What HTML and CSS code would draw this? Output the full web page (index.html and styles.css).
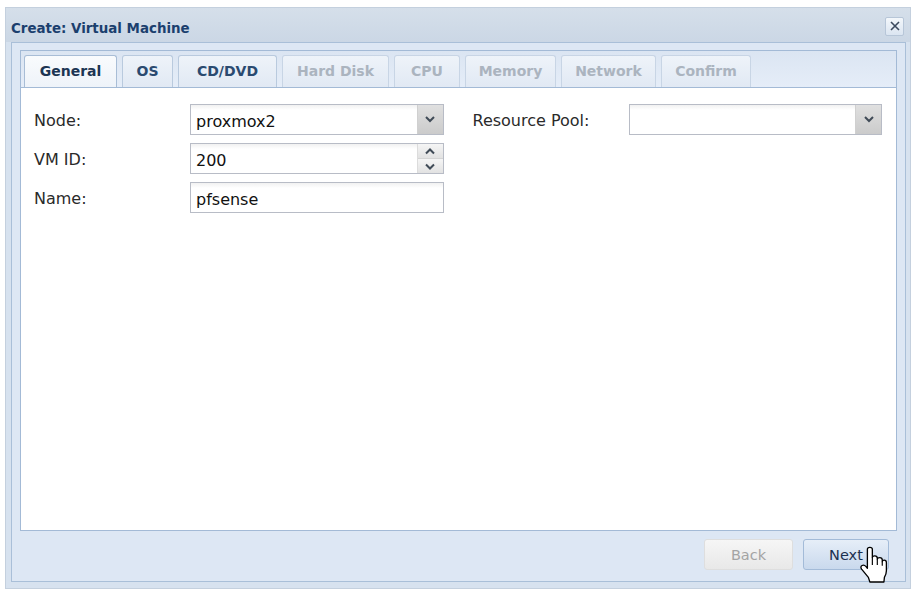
FILE: index.html
```html
<!DOCTYPE html>
<html>
<head>
<meta charset="utf-8">
<link rel="stylesheet" href="styles.css">
</head>
<body>
<div class="window">
  <div class="titlebar">
    <span class="title">Create: Virtual Machine</span>
    <span class="close">
      <svg width="12" height="12" viewBox="0 0 12 12"><path d="M2 2 L10 10 M10 2 L2 10" stroke="#3b4a5e" stroke-width="1.6" fill="none"/></svg>
    </span>
  </div>
  <div class="frame">
    <div class="tabpanel">
      <div class="tabstrip">
        <div class="tab active t-general">General</div>
        <div class="tab on t-os">OS</div>
        <div class="tab on t-cd">CD/DVD</div>
        <div class="tab off t-hd">Hard Disk</div>
        <div class="tab off t-cpu">CPU</div>
        <div class="tab off t-mem">Memory</div>
        <div class="tab off t-net">Network</div>
        <div class="tab off t-conf">Confirm</div>
      </div>
      <div class="content">
        <div class="col">
          <div class="row">
            <label class="lbl">Node:</label>
            <div class="field">
              <span class="val">proxmox2</span>
              <span class="trigger">
                <svg width="10" height="7" viewBox="0 0 10 7"><path d="M1 1 L5 5 L9 1" stroke="#404b57" stroke-width="2" fill="none"/></svg>
              </span>
            </div>
          </div>
          <div class="row">
            <label class="lbl">VM ID:</label>
            <div class="field">
              <span class="val">200</span>
              <span class="spin">
                <span class="spinhalf"><svg width="10" height="7" viewBox="0 0 10 7"><path d="M1 5.5 L5 1.5 L9 5.5" stroke="#404b57" stroke-width="2" fill="none"/></svg></span>
                <span class="spinhalf"><svg width="10" height="7" viewBox="0 0 10 7"><path d="M1 1.5 L5 5.5 L9 1.5" stroke="#404b57" stroke-width="2" fill="none"/></svg></span>
              </span>
            </div>
          </div>
          <div class="row">
            <label class="lbl">Name:</label>
            <div class="field">
              <span class="val">pfsense</span>
            </div>
          </div>
        </div>
        <div class="col">
          <div class="row">
            <label class="lbl">Resource Pool:</label>
            <div class="field">
              <span class="val"></span>
              <span class="trigger">
                <svg width="10" height="7" viewBox="0 0 10 7"><path d="M1 1 L5 5 L9 1" stroke="#404b57" stroke-width="2" fill="none"/></svg>
              </span>
            </div>
          </div>
        </div>
      </div>
    </div>
    <div class="toolbar">
      <div class="btn disabled">Back</div>
      <div class="btn primary">Next
        <svg class="cursor" width="30" height="38" viewBox="0 0 18 23">
          <path d="M5 2 Q5 0.8 6.5 0.8 Q8 0.8 8 2 L8 7 Q8 6 9.5 6 Q11 6 11 7.5 L11 8 Q11 7 12.5 7 Q14 7 14 8.5 L14 9.5 Q14 8.5 15.2 8.5 Q16.5 8.5 16.5 10 L16.5 15 Q16.5 17 15.3 19 L15 21.8 L6.5 21.8 L5.6 19 L1.5 14 Q0.5 12.5 1.8 11.8 Q3 11.2 4.2 12.5 L5 13.5 Z" fill="#fff" stroke="#000" stroke-width="0.8" stroke-linejoin="round"/>
          <path d="M8 7 L8 11.5 M11 8 L11 11.5 M14 9.5 L14 12" stroke="#000" stroke-width="0.7" fill="none"/>
        </svg>
      </div>
    </div>
  </div>
</div>
</body>
</html>
```
FILE: styles.css
```css
html, body {
  margin: 0;
  padding: 0;
  background: #ffffff;
}
body {
  font-family: "DejaVu Sans", sans-serif;
}
.window {
  margin: 7px 0 0 5px;
  width: 906px;
  height: 582px;
  box-sizing: border-box;
  border: 1px solid #c4d0de;
  background: #d7e2ef;
  display: flex;
  flex-direction: column;
}
.titlebar {
  height: 34px;
  display: flex;
  align-items: center;
  justify-content: space-between;
  padding: 0 6px 0 5px;
  background: linear-gradient(#d5dfea, #cbd7e5);
}
.title {
  font-weight: bold;
  font-size: 13.4px;
  color: #1b3f6e;
  padding-top: 6px;
}
.close {
  width: 19px;
  height: 19px;
  box-sizing: border-box;
  border: 1px solid #b7c6d8;
  border-radius: 2px;
  background: linear-gradient(#f3f7fb, #dbe5f1);
  display: flex;
  align-items: center;
  justify-content: center;
  margin-top: 2px;
}
.frame {
  flex: 1;
  margin: 0 4px 6px 5px;
  border: 1px solid #a9bfd8;
  background: #dde7f4;
  display: flex;
  flex-direction: column;
  padding: 7px 8px 0 8px;
}
.tabpanel {
  height: 481px;
  box-sizing: border-box;
  border: 1px solid #a3bad6;
  display: flex;
  flex-direction: column;
  background: #fff;
}
.tabstrip {
  height: 37px;
  box-sizing: border-box;
  background: linear-gradient(#dbe5f2, #e5edf8);
  border-bottom: 1px solid #a3bad6;
  display: flex;
  align-items: flex-end;
  gap: 5px;
  padding-left: 3px;
}
.tab {
  height: 32px;
  box-sizing: border-box;
  border: 1px solid #b9cade;
  border-bottom: none;
  border-radius: 3px 3px 0 0;
  background: linear-gradient(#eef3f9, #e1e9f4);
  font-weight: bold;
  font-size: 14px;
  display: flex;
  align-items: center;
  justify-content: center;
  padding-bottom: 1px;
}
.t-general { width: 93px; }
.t-os { width: 51px; }
.t-cd { width: 99px; }
.t-hd { width: 107px; }
.t-cpu { width: 66px; }
.t-mem { width: 91px; }
.t-net { width: 95px; }
.t-conf { width: 90px; }
.tab.active {
  background: linear-gradient(#f9fbfd, #eef3f9);
  color: #1c3553;
  border-color: #a8bdd6;
}
.tab.on {
  color: #2a4a70;
}
.tab.off {
  color: #abb4bf;
  border-color: #c8d5e5;
}
.content {
  flex: 1;
  display: flex;
  gap: 29px;
  padding: 16px 14px 0 13px;
}
.col {
  display: flex;
  flex-direction: column;
  gap: 8px;
  width: 410px;
}
.row {
  display: flex;
  align-items: center;
  height: 31px;
}
.lbl {
  width: 156px;
  font-size: 16px;
  color: #2a2a2a;
  padding-top: 2px;
}
.field {
  flex: 1;
  height: 31px;
  box-sizing: border-box;
  border: 1px solid #b8bcc6;
  background: linear-gradient(#f1f1f1, #ffffff 5px);
  display: flex;
  align-items: stretch;
}
.val {
  flex: 1;
  font-size: 16px;
  color: #111;
  padding-left: 5px;
  display: flex;
  align-items: center;
  padding-top: 3px;
}
.trigger {
  width: 25px;
  border-left: 1px solid #d0d0d0;
  background: linear-gradient(#e0e0e0, #cbcbcb);
  display: flex;
  align-items: center;
  justify-content: center;
}
.spin {
  width: 25px;
  display: flex;
  flex-direction: column;
  border-left: 1px solid #dcdcdc;
}
.spinhalf {
  flex: 1;
  display: flex;
  align-items: center;
  justify-content: center;
  background: linear-gradient(#f5f5f5, #e2e2e2);
}
.spinhalf + .spinhalf {
  border-top: 1px solid #d4d4d4;
}
.toolbar {
  flex: 1;
  display: flex;
  justify-content: flex-end;
  align-items: flex-start;
  gap: 10px;
  padding: 8px 8px 0 0;
}
.btn {
  position: relative;
  height: 31px;
  box-sizing: border-box;
  border-radius: 3px;
  font-size: 14.5px;
  display: flex;
  align-items: center;
  justify-content: center;
  padding-top: 1px;
}
.btn.disabled {
  width: 89px;
  border: 1px solid #dedede;
  background: linear-gradient(#f6f6f6, #e8e8e8);
  color: #a4a4a4;
}
.btn.primary {
  width: 86px;
  border: 1px solid #a3bbd8;
  background: linear-gradient(#e6eef8, #c9d9ed);
  color: #1c3050;
}
.cursor {
  position: absolute;
  left: 55px;
  top: 6px;
}
```
